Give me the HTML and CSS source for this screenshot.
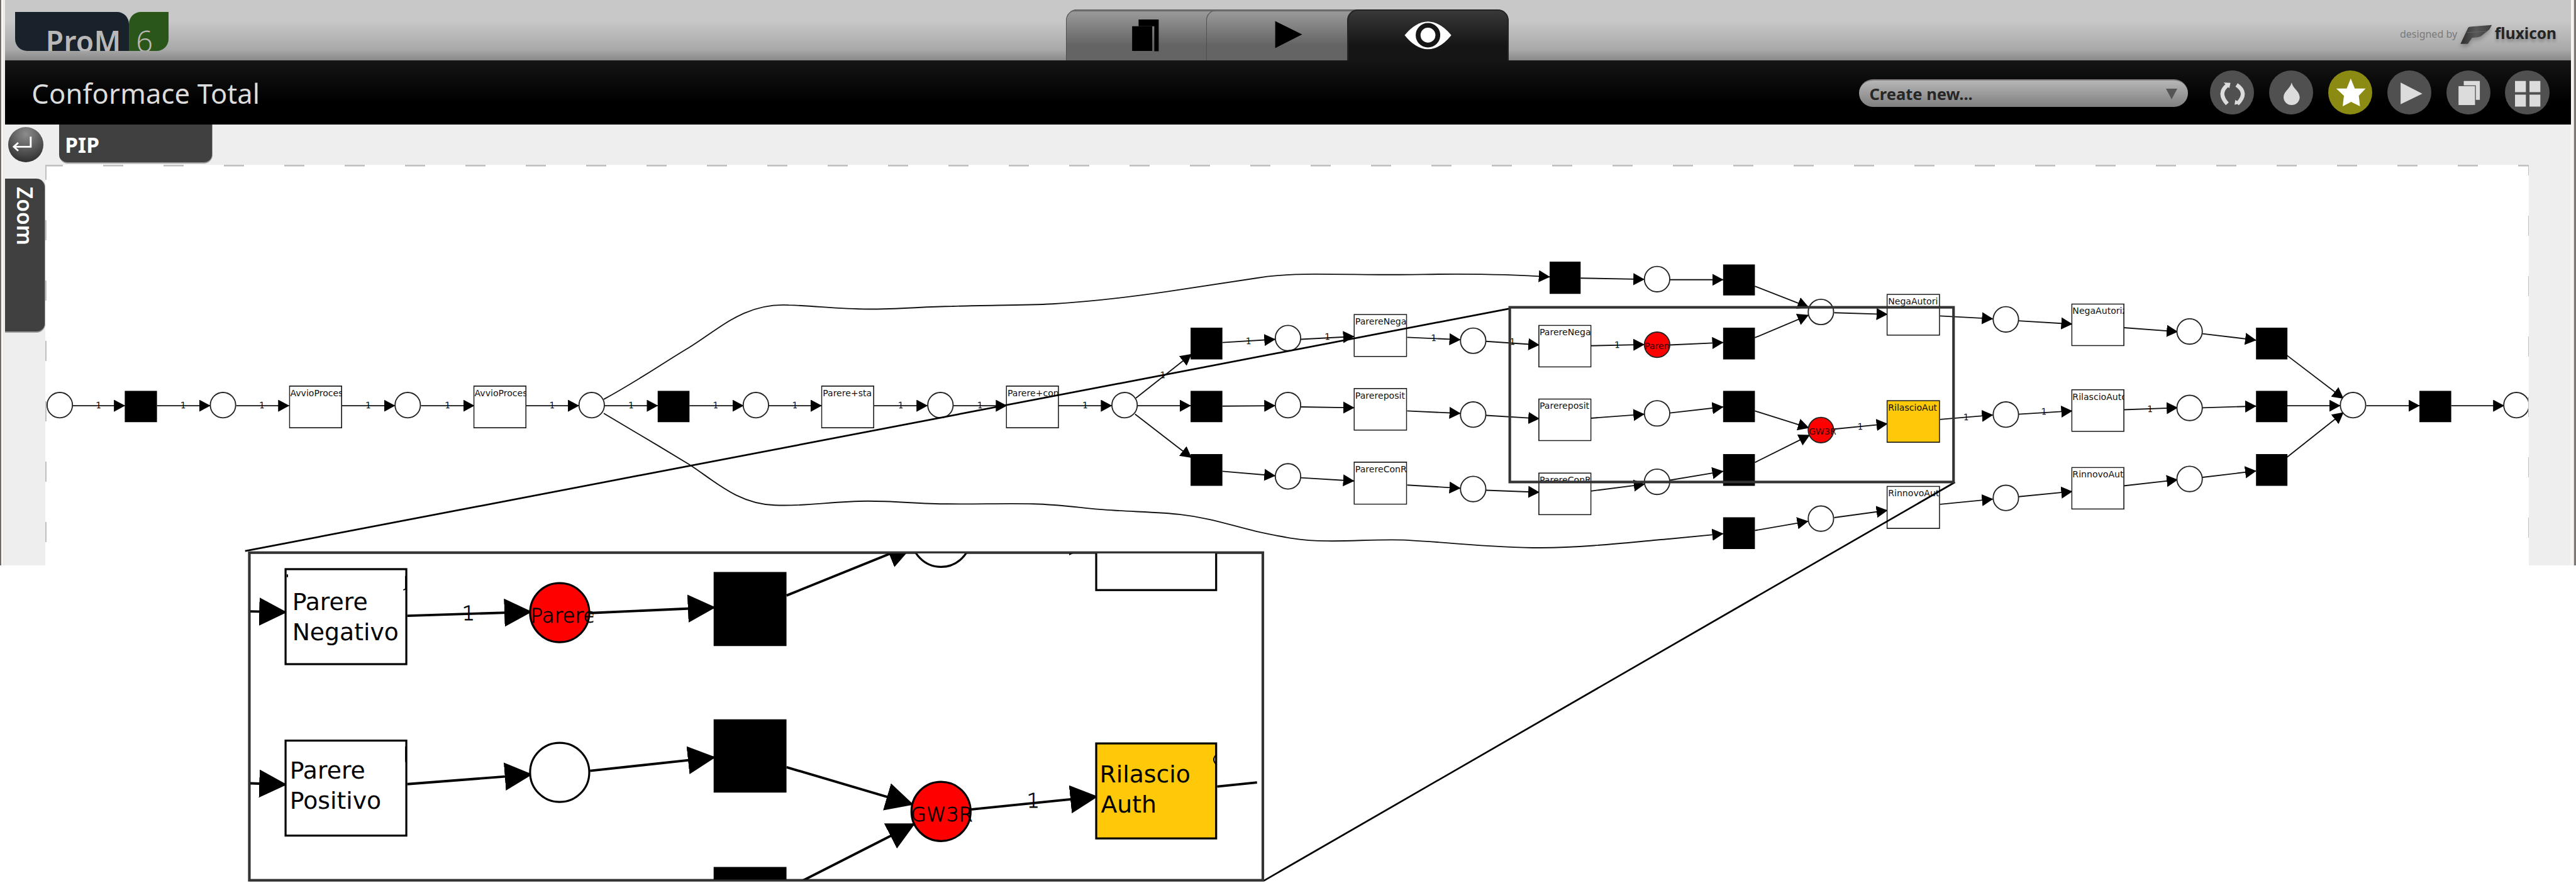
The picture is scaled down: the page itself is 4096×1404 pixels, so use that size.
FILE: index.html
```html
<!DOCTYPE html>
<html lang="it">
<head>
<meta charset="utf-8">
<title>ProM 6 - Conformace Total</title>
<link rel="stylesheet" href="styles.css">
</head>
<body>
<div class="app">
  <header class="topbar">
    <div class="logo"><div class="logo-name"><span>ProM</span></div><div class="logo-version"><span>6</span></div></div>
    <nav class="tabs">
      <div class="tab tab-first"><svg class="tab-icon" viewBox="0 0 350 126"><path d="M182 25h50v79h-11V42h-39z"/><path d="M166 42h50v61h-50z"/></svg></div>
      <div class="tab tab-second"><svg class="tab-icon" viewBox="0 0 350 126"><path d="M173 29l67 33-67 34z"/></svg></div>
      <div class="tab tab-active"><svg class="tab-icon" viewBox="0 0 401 126"><path class="eye-lens" d="M143 64Q170 31 201 30Q232 31 259 64Q232 98 201 99Q170 98 143 64z"/><circle class="eye-ring" cx="201" cy="64" r="24.500"/></svg></div>
    </nav>
    <div class="credit"><span class="credit-by">designed by</span><svg class="credit-mark" viewBox="0 0 84 60"><defs><linearGradient id="mark"><stop offset="0" stop-color="#2c2c2c"/><stop offset=".5" stop-color="#585858"/><stop offset="1" stop-color="#3c3c3c"/></linearGradient></defs><path fill="url(#mark)" d="M21 8Q23 5 30 5L80 1 74 12 54 28Q50 31 40 32L31 33 20 48 2 48z"/><path d="M18 20L66 17" stroke="#777" stroke-width="1.500" opacity=".6"/></svg><span class="credit-name">fluxicon</span></div>
  </header>
  <div class="titlebar">
    <h1 class="title">Conformace Total</h1>
    <div class="actions">
      <div class="select"><span>Create new...</span><i class="caret"></i></div>
      <div class="round"><svg viewBox="0 0 110 110"><path class="arc" d="M44 36Q18 56 43 83M66 36Q96 56 68 83"/><path d="M34 30l17 1-3 13zM63 73l-2 12 15-3z"/></svg></div>
      <div class="round"><svg viewBox="0 0 110 110"><path d="M56 30C60 47 76 51 76 67A20 19 0 0 1 36 67C36 51 52 47 56 30z"/></svg></div>
      <div class="round round-on"><svg viewBox="0 0 110 110"><path d="M56 20L66 45 93 45 76 63 79 89 57 78 36 89 39 63 20 45 46 45z"/></svg></div>
      <div class="round"><svg viewBox="0 0 110 110"><path d="M33 30L87 58 33 84z"/></svg></div>
      <div class="round"><svg viewBox="0 0 110 110"><path d="M43 26h40v47H73V37H43z"/><path d="M30 39h41v47H30z"/></svg></div>
      <div class="round"><svg viewBox="0 0 110 110"><path d="M25 26h27v28H25zM61 26h27v28H61zM25 60h27v30H25zM61 60h27v30H61z"/></svg></div>
    </div>
  </div>
  <main class="workspace">
    <aside class="rail">
      <div class="back"><svg viewBox="0 0 88 88"><path d="M56 24V49H15M25 39L14 49 25 59"/></svg></div>
      <div class="zoom-tab"><span>Zoom</span></div>
    </aside>
    <section class="stage">
      <div class="stage-tab">PIP</div>
      <div class="canvas"></div>
    </section>
  </main>
</div>

<svg class="net" viewBox="0 0 6400 2193.750" preserveAspectRatio="none">
  <defs>
    <marker id="arrow" markerUnits="userSpaceOnUse" markerWidth="30" markerHeight="32" refX="27" refY="15" orient="auto"><path class="head" d="M0 0L28 15 0 30z"/></marker>
    <marker id="arrow-lg" markerUnits="userSpaceOnUse" markerWidth="72" markerHeight="72" refX="68" refY="35" orient="auto"><path class="head" d="M0 0L69 35 0 70z"/></marker>
    <clipPath id="canvas-clip"><rect x="113" y="410" width="6168" height="994"/></clipPath>
    <clipPath id="inset-clip"><rect x="622" y="1375" width="2513" height="810"/></clipPath>
  </defs>

  <g class="edges" clip-path="url(#canvas-clip)">
    <path d="M179 1008H310"/><path d="M390 1008H522"/><path d="M587 1008H718"/><path d="M849 1008H981"/><path d="M1046 1008H1178"/><path d="M1306 1008H1438"/>
    <path d="M1502 1008H1634"/><path d="M1713 1008H1847"/><path d="M1909 1008H2041"/><path d="M2172 1008H2304"/><path d="M2369 1008H2501"/><path d="M2629 1008H2762"/>
    <path d="M2822 989L2960 880"/><path d="M2826 1008H2958"/><path d="M2820 1029L2960 1137"/>
    <path d="M3037 851L3168 843"/><path d="M3232 843L3364 836"/><path d="M3496 838L3628 844"/><path d="M3692 848L3824 857"/>
    <path d="M3037 1009L3168 1008"/><path d="M3232 1011L3364 1013"/><path d="M3496 1021L3628 1027"/><path d="M3692 1032L3824 1040"/>
    <path d="M3037 1171L3168 1182"/><path d="M3232 1187L3364 1195"/><path d="M3496 1205L3628 1213"/><path d="M3692 1218L3824 1223"/>
    <path d="M3927 691L4085 694"/><path d="M4149 695H4281"/><path d="M4360 711L4493 763"/><path d="M4360 839L4493 783"/>
    <path d="M3952 859L4085 856"/><path d="M4149 857L4281 851"/>
    <path d="M3952 1039L4085 1029"/><path d="M4149 1026L4281 1011"/><path d="M4360 1021L4494 1063"/>
    <path d="M3952 1220L4086 1203"/><path d="M4149 1193L4281 1171"/><path d="M4360 1149L4496 1081"/>
    <path d="M4557 777L4689 781"/><path d="M4820 785L4951 792"/><path d="M4557 1066L4689 1053"/><path d="M4820 1042L4951 1031"/>
    <path d="M4360 1318L4492 1295"/><path d="M4557 1286L4689 1268"/><path d="M4820 1253L4951 1240"/>
    <path d="M5015 797L5148 805"/><path d="M5276 814L5410 824"/><path d="M5472 829L5605 845"/><path d="M5682 883L5822 990"/>
    <path d="M5015 1029L5148 1021"/><path d="M5276 1018L5410 1013"/><path d="M5472 1013L5605 1009"/><path d="M5682 1008H5814"/><path d="M5682 1136L5822 1025"/>
    <path d="M5015 1234L5148 1221"/><path d="M5276 1207L5410 1192"/><path d="M5472 1186L5605 1170"/><path d="M5879 1008H6011"/><path d="M6090 1008H6221"/>
    <path d="M1500 992C1590 943 1650 900 1711 864C1790 815 1850 752 1960 758C2030 760 2080 768 2156 768C2240 768 2290 762 2366 761C2450 758 2540 759 2615 755C2700 750 2800 739 2900 724.500C2990 711 3060 700 3121 691C3170 683 3220 681 3266 681C3340 681 3390 682.500 3450 682.500C3510 682.500 3560 681 3618 681C3700 681 3760 682 3850 688"/>
    <path d="M1500 1027C1580 1074 1640 1110 1711 1153C1770 1190 1830 1252 1925 1255C2000 1259 2070 1245 2156 1245C2230 1245 2280 1252 2357 1252C2430 1253 2500 1250 2567 1252C2650 1254 2700 1265 2768 1268C2810 1271 2890 1273 2930 1278C3010 1287 3060 1306 3121 1320C3180 1333 3230 1344 3297 1344C3360 1345 3430 1339 3496 1342C3620 1349 3710 1361 3828 1361C3950 1360 4060 1346 4146 1339L4281 1326"/>
  </g>

  <g class="weights">
    <text x="245" y="1014">1</text><text x="455" y="1014">1</text><text x="651" y="1014">1</text><text x="915" y="1014">1</text><text x="1112" y="1014">1</text><text x="1372" y="1014">1</text><text x="1568" y="1014">1</text><text x="1778" y="1014">1</text><text x="1975" y="1014">1</text><text x="2238" y="1014">1</text><text x="2435" y="1014">1</text><text x="2696" y="1014">1</text>
    <text x="2889" y="939">1</text><text x="3102" y="854">1</text><text x="3298" y="844">1</text><text x="3562" y="847">1</text><text x="3758" y="857">1</text><text x="4018" y="864">1</text><text x="4622" y="1067">1</text><text x="4885" y="1043">1</text><text x="5078" y="1030">1</text><text x="5342" y="1024">1</text>
  </g>

  <g class="places" clip-path="url(#canvas-clip)">
    <circle cx="148.500" cy="1006.500" r="31.500"/><circle cx="554" cy="1006.500" r="31.500"/><circle cx="1013" cy="1006.500" r="31.500"/><circle cx="1470" cy="1006.500" r="31.500"/><circle cx="1878" cy="1006.500" r="31.500"/><circle cx="2336.500" cy="1006.500" r="31.500"/><circle cx="2794" cy="1006.500" r="31.500"/>
    <circle cx="3200" cy="840" r="31.500"/><circle cx="3200" cy="1006.500" r="31.500"/><circle cx="3200" cy="1183.500" r="31.500"/>
    <circle cx="3660" cy="846.500" r="31.500"/><circle cx="3660" cy="1030" r="31.500"/><circle cx="3660" cy="1215" r="31.500"/>
    <circle cx="4117" cy="693.500" r="31.500"/><circle class="hot" cx="4117" cy="856.500" r="31.500"/><circle cx="4117" cy="1027" r="31.500"/><circle cx="4117" cy="1197" r="31.500"/>
    <circle cx="4524" cy="775" r="31.500"/><circle class="hot" cx="4524" cy="1068.500" r="31.500"/><circle cx="4524" cy="1288.500" r="31.500"/>
    <circle cx="4983.500" cy="793.500" r="31.500"/><circle cx="4983.500" cy="1030" r="31.500"/><circle cx="4983.500" cy="1237" r="31.500"/>
    <circle cx="5440" cy="823.500" r="31.500"/><circle cx="5440" cy="1013.500" r="31.500"/><circle cx="5440" cy="1190" r="31.500"/>
    <circle cx="5846" cy="1006.500" r="31.500"/><circle cx="6252" cy="1006.500" r="31.500"/>
  </g>
  <g class="silent">
    <path d="M310 971h80v78h-80zM1634 971h79v78h-79zM2958 814h79v79h-79zM2958 971h79v78h-79zM2958 1128h79v79h-79zM3850 650h77v80h-77zM4281 657h79v77h-79zM4281 814h79v79h-79zM4281 971h79v78h-79zM4281 1128h79v79h-79zM4281 1285h79v79h-79zM5605 814h78v79h-78zM5605 971h78v78h-78zM5605 1128h78v79h-78zM6011 971h79v78h-79z"/>
  </g>
  <g class="tasks">
    <svg x="718" y="958" width="132" height="106"><rect x="1.250" y="1.250" width="129.500" height="103.500"/><text x="3" y="26">AvvioProces</text></svg>
    <svg x="1176" y="958" width="132" height="106"><rect x="1.250" y="1.250" width="129.500" height="103.500"/><text x="3" y="26">AvvioProces</text></svg>
    <svg x="2040" y="958" width="132" height="106"><rect x="1.250" y="1.250" width="129.500" height="103.500"/><text x="4" y="26">Parere+sta</text></svg>
    <svg x="2499" y="958" width="132" height="106"><rect x="1.250" y="1.250" width="129.500" height="103.500"/><text x="4" y="26">Parere+con</text></svg>
    <svg x="3363" y="780" width="133" height="107"><rect x="1.250" y="1.250" width="130.500" height="104.500"/><text x="4" y="26">ParereNega</text></svg>
    <svg x="3363" y="964" width="133" height="106"><rect x="1.250" y="1.250" width="130.500" height="103.500"/><text x="4" y="26">Parereposit</text></svg>
    <svg x="3363" y="1147" width="133" height="107"><rect x="1.250" y="1.250" width="130.500" height="104.500"/><text x="4" y="26">ParereConR</text></svg>
    <svg x="3822" y="807" width="132" height="106"><rect x="1.250" y="1.250" width="129.500" height="103.500"/><text x="3" y="26">ParereNega</text></svg>
    <svg x="3822" y="990" width="132" height="106"><rect x="1.250" y="1.250" width="129.500" height="103.500"/><text x="3" y="26">Parereposit</text></svg>
    <svg x="3822" y="1174" width="132" height="106"><rect x="1.250" y="1.250" width="129.500" height="103.500"/><text x="3" y="26">ParereConR</text></svg>
    <svg x="4687" y="730" width="133" height="104"><rect x="1.250" y="1.250" width="130.500" height="101.500"/><text x="4" y="26">NegaAutori</text></svg>
    <svg x="4687" y="994" width="133" height="106"><rect class="warm" x="1.250" y="1.250" width="130.500" height="103.500"/><text x="4" y="26">RilascioAut</text></svg>
    <svg x="4687" y="1207" width="133" height="107"><rect x="1.250" y="1.250" width="130.500" height="104.500"/><text x="4" y="26">RinnovoAut</text></svg>
    <svg x="5146" y="754" width="132" height="106"><rect x="1.250" y="1.250" width="129.500" height="103.500"/><text x="3" y="26">NegaAutoriz</text></svg>
    <svg x="5146" y="967" width="132" height="106"><rect x="1.250" y="1.250" width="129.500" height="103.500"/><text x="3" y="26">RilascioAuto</text></svg>
    <svg x="5146" y="1160" width="132" height="106"><rect x="1.250" y="1.250" width="129.500" height="103.500"/><text x="3" y="26">RinnovoAuto</text></svg>
  </g>
  <g class="hot-labels"><text x="4086" y="867">Paren</text><text x="4494" y="1079">GW3R</text></g>

  <g class="callout">
    <path class="ray" d="M609 1369L3749 767M4857 1198L3140 2188"/>
    <rect class="frame" x="3751" y="763.500" width="1102.500" height="434"/>
    <rect class="frame inset" x="619.500" y="1373" width="2518" height="814"/>
  </g>

  <g class="detail" clip-path="url(#inset-clip)">
    <g class="edges">
      <path d="M620 1519L712 1521"/><path d="M1012 1530L1321 1520"/><path d="M1466 1523L1777 1509"/><path d="M1954 1479.500L2272 1351"/>
      <path d="M620 1946L712 1949"/><path d="M1012 1948L1322 1924"/><path d="M1466 1915L1777 1881.500"/><path d="M1954 1906L2269 1999"/>
      <path d="M1937 2217L2273 2046"/><path d="M2411 2011L2727 1979"/><path d="M2411 1340L2725 1346"/><path class="plain" d="M3024 1954L3123 1944"/>
    </g>
    <g class="places"><circle cx="1390.500" cy="1919" r="73.500"/><circle cx="2338" cy="1335" r="73.500"/><circle class="hot" cx="1390.500" cy="1522" r="73.500"/><circle class="hot" cx="2338" cy="2016" r="73.500"/></g>
    <path class="head" d="M1773 1421h181v184h-181zM1773 1787h181v182h-181zM1773 2154h181v40h-181z"/>
    <rect class="box" x="709.500" y="1414" width="300" height="236"/><rect class="box" x="709.500" y="1840" width="300" height="236"/>
    <rect class="box" x="2723.500" y="1230" width="298" height="236"/><rect class="box warm" x="2723.500" y="1847" width="298" height="236"/>
    <path class="stub" d="M714 1427v7M1008 1431v32l-6 3M1008 1855v38M3023 1874q-15 13 0 26"/>
    <g class="names">
      <text x="726" y="1516">Parere</text><text x="726" y="1590">Negativo</text>
      <text x="720" y="1935">Parere</text><text x="720" y="2010">Positivo</text>
      <text x="2732" y="1943">Rilascio</text><text x="2735" y="2018">Auth</text>
    </g>
    <g class="thin"><text x="1164" y="1540" text-anchor="middle">1</text><text x="2567" y="2006" text-anchor="middle">1</text>
    <svg x="1316" y="1490" width="158" height="70"><text x="2" y="57">Parere</text></svg><svg x="2262" y="1980" width="156" height="70"><text x="1" y="60" textLength="154" lengthAdjust="spacingAndGlyphs">GW3R</text></svg></g>
  </g>
</svg>
</body>
</html>
```
FILE: styles.css
```css
* { box-sizing: border-box; margin: 0; padding: 0; }
body {
  position: relative;
  width: 4096px;
  height: 1404px;
  overflow: hidden;
  background: #fff;
  font-family: "Noto Sans", "Open Sans", sans-serif;
}
svg { display: block; }
.app {
  display: flex;
  flex-direction: column;
  height: 898.500px;
  padding: 0 8.500px 0 8.300px;
  background: linear-gradient(90deg, #6e6b69 0 2px, #fff 2px 4.500px, #f0ebe8 4.500px 8.300px, #eee 8.300px 4087.500px, #f6f4f3 4087.500px 4092px, #dcd8d6 4092px 4093.500px, #7c7876 4093.500px);
}

/* top bar */
.topbar {
  display: flex;
  position: relative;
  flex: none;
  height: 96px;
  background: linear-gradient(#c8c8c8 0 34%, #a9a9a9 82%, #888 100%);
}
.logo { display: flex; width: 244.500px; height: 61.500px; margin: 19px 0 0 15.500px; }
.logo-name, .logo-version { overflow: hidden; color: #b8b8b8; line-height: 1; }
.logo-name { width: 181.500px; background: #19212b; border-radius: 0 19px 0 19px; }
.logo-version { width: 63px; background: #2a561a; border-radius: 19px 0 19px 0; }
.logo span { display: block; font-size: 46px; line-height: 63px; padding-top: 15px; }
.logo-name span { padding-left: 49px; font-weight: 600; letter-spacing: .3px; }
.logo-version span { padding-left: 11px; font-size: 47px; font-weight: 300; }
.tabs {
  display: flex;
  position: absolute;
  left: 1686.500px;
  top: 15.400px;
  width: 704px;
  height: 80.600px;
  overflow: hidden;
  border-radius: 17px 17px 0 0;
  background: linear-gradient(#666 0 2px, #999 4px, #646464 70%);
}
.tab { height: 100%; border-left: 1.500px solid #505050; border-top: 2px solid #666; border-radius: 17px 0 0 0; }
.tab-first { width: 223.500px; }
.tab-second { width: 224px; }
.tab-active { width: 256.500px; border: 2px solid #242424; border-bottom: 0; border-radius: 17px 17px 0 0; background: linear-gradient(#383838, #151515 70%); }
.tab-icon { height: 80.600px; margin-top: -2px; margin-left: -2px; }
.eye-lens { fill: #fff; }
.eye-ring { fill: #fff; stroke: #161616; stroke-width: 12; }
.credit { display: flex; position: absolute; left: 3807.700px; top: 40px; height: 40px; white-space: nowrap; line-height: 26px; }
.credit-by { width: 90px; color: #7a7a7a; font-size: 16px; padding-top: 1px; }
.credit-mark { width: 53.800px; height: 38.400px; margin-top: -1.500px; margin-left: 5px; filter: drop-shadow(0 4px 3px rgba(0,0,0,.25)); }
.credit-name { color: #242424; font-size: 24.500px; font-weight: 700; text-shadow: 0 4px 4px rgba(0,0,0,.25); margin-left: 2px; }

/* title bar */
.titlebar {
  display: flex;
  align-items: center;
  justify-content: space-between;
  flex: none;
  height: 102.400px;
  padding: 0 33.700px 0 42px;
  background: linear-gradient(#151515, #000 66%);
}
.title { color: #dcdcdc; font-size: 43.500px; font-weight: 400; line-height: 60px; padding-top: 2px; letter-spacing: .15px; }
.actions { display: flex; align-items: center; gap: 23.500px; }
.select {
  display: flex;
  align-items: center;
  justify-content: space-between;
  width: 523px;
  height: 44px;
  margin: 2px 11px 0 0;
  padding: 0 17px 0 16px;
  border-top: 2px solid #7f7a7a;
  border-radius: 22px;
  background: linear-gradient(#b6b6b6, #7f7f7f);
  color: #262626;
  font-size: 25.500px;
  font-weight: 700;
}
.caret { border: 9px solid transparent; border-top: 17px solid #555; border-bottom: 0; }
.round { width: 70.400px; height: 70.400px; border-radius: 50%; background: #505050; fill: #dcdcdc; }
.round-on { background: #8b8b14; fill: #fff; }
.arc { fill: none; stroke: #dcdcdc; stroke-width: 10; }

/* workspace */
.workspace { display: flex; flex: 1; }
.rail { width: 64px; }
.back { width: 56.300px; height: 56.300px; margin: 3.700px 0 0 4.700px; border-radius: 50%; background: radial-gradient(circle at 50% 20%, #8c8c8c, #565656 50%, #242424 95%); }
.back path { fill: none; stroke: #fff; stroke-width: 4.500; }
.zoom-tab {
  width: 64px;
  height: 245.500px;
  margin-top: 25.600px;
  border-radius: 0 14px 14px 0;
  border-bottom: 2px solid #999;
  border-right: 1.500px solid #999;
  background: #404040;
}
.zoom-tab span { display: block; writing-mode: vertical-rl; color: #fff; font-size: 33.500px; font-weight: 600; line-height: 64px; padding-top: 13px; }
.stage { width: 3948.500px; }
.stage-tab {
  width: 244px;
  height: 62px;
  margin-left: 22px;
  padding-left: 9px;
  border-radius: 0 0 14px 14px;
  border-bottom: 2px solid #999;
  border-right: 1.500px solid #999;
  background: #404040;
  color: #fff;
  font-size: 33.500px;
  font-weight: 700;
  line-height: 64px;
}
.canvas {
  height: 636.200px;
  margin-top: 2px;
  background:
    repeating-linear-gradient(90deg, transparent 0 60px, #c0c0c0 60px 92px, transparent 92px 96px) 32px 0 / 100% 2.600px no-repeat,
    linear-gradient(#c0c0c0, #c0c0c0) 0 0 / 28px 2.600px no-repeat,
    linear-gradient(#c0c0c0, #c0c0c0) 0 0 / 2.400px 24px no-repeat,
    repeating-linear-gradient(180deg, transparent 0 64px, #c0c0c0 64px 96px) 0 24px / 2.400px 100% no-repeat,
    repeating-linear-gradient(180deg, #c0c0c0 0 17px, transparent 17px 81px, #c0c0c0 81px 96px) 100% 0 / 1.200px 100% no-repeat,
    #fff;
}

/* Petri net */
.net { position: absolute; left: 0; top: 0; width: 4096px; height: 1404px; font-family: "DejaVu Sans", sans-serif; }
.edges path { fill: none; stroke: #111; stroke-width: 2.900; marker-end: url(#arrow); }
.head, .silent { fill: #000; }
.weights { font-size: 21px; font-weight: 200; text-anchor: middle; fill: #000; stroke: #000; stroke-width: .8; }
.places circle { fill: #fff; stroke: #222; stroke-width: 2.900; }
.places .hot { fill: #f00; }
.tasks rect { fill: #fff; stroke: #1c1c1c; stroke-width: 2.700; }
.tasks .warm, .detail .warm { fill: #ffc808; }
.tasks text { font-size: 22px; fill: #111; }
.hot-labels text { font-size: 22px; fill: #300; }
.ray { fill: none; stroke: #000; stroke-width: 4.200; }
.frame { fill: none; stroke: #333; stroke-width: 6.500; }
.inset { fill: #fff; }
.detail .edges path { stroke: #000; stroke-width: 6; marker-end: url(#arrow-lg); }
.detail .edges .plain { marker-end: none; }
.detail .places circle { stroke: #000; stroke-width: 5; }
.box { fill: #fff; stroke: #000; stroke-width: 5; }
.stub { fill: none; stroke: #000; stroke-width: 3; }
.names { font-size: 59px; }
.thin { font-size: 51px; font-weight: 200; stroke: #000; stroke-width: 1.200; }
```
